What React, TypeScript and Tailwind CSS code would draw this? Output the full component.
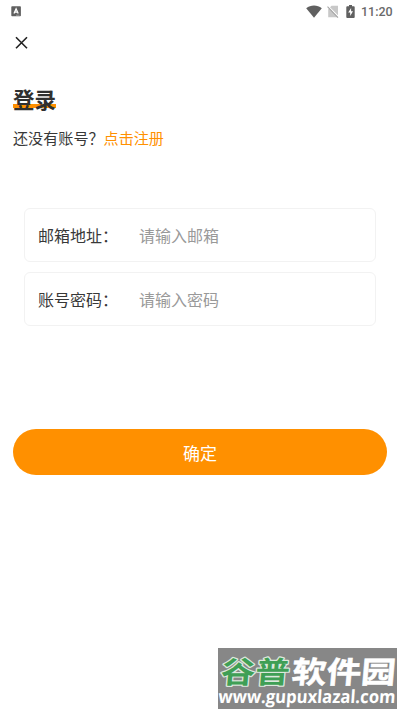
import React, { useState } from 'react';

function StatusBar() {
  return (
    <header className="flex h-[22px] items-center justify-between pl-[11px] pr-[7px]">
      <svg width="11" height="11" viewBox="0 0 11 11">
        <rect x="0.3" y="0.3" width="9.6" height="10" rx="0.8" fill="#606060" />
        <path d="M3 7.5 5.1 2.8 7.2 7.5M3.8 6.2h2.6" fill="none" stroke="#fff" strokeWidth="1.3" />
        <path d="M5 9.2h3.5" stroke="#bbb" strokeWidth="0.7" />
      </svg>
      <div className="flex items-center">
        <svg width="16" height="13" viewBox="0 0 16 13" fill="#606060">
          <path d="M0.2 3.2C4.7-0.3 11.3-0.3 15.8 3.2L8 12.8Z" />
        </svg>
        <svg className="ml-[5px]" width="12" height="13" viewBox="0 0 12 13">
          <path d="M4.5 0.8H11v11.4H1.2V4.3Z" fill="#c8c8c8" />
          <path d="M0.8 0.8 11.8 12" stroke="#fff" strokeWidth="1.2" />
          <path d="M0.5 1.6 11 12.6" stroke="#a5a5a5" strokeWidth="1.1" />
        </svg>
        <svg className="ml-[7px]" width="9" height="13" viewBox="0 0 9 13">
          <path d="M3 0h3v1.3h1.8q.9 0 .9.9v9.9q0 .9-.9.9H1.2q-.9 0-.9-.9V2.2q0-.9.9-.9H3Z" fill="#606060" />
          <path d="M5.1 3 2.2 7.6h2v3.4l2.8-4.7h-1.9Z" fill="#fff" />
        </svg>
        <span className="ml-[6px] mt-[2px] w-8 whitespace-nowrap font-['Roboto',sans-serif] text-[12.5px] font-medium leading-none text-[#6a6a6a]">
          11:20
        </span>
      </div>
    </header>
  );
}

interface FieldProps {
  label: string;
  placeholder: string;
  type: string;
}

function Field({ label, placeholder, type }: FieldProps) {
  const [value, setValue] = useState('');

  return (
    <label className="flex h-[54px] items-center rounded-md border border-[#f2f2f2] pl-[13px] pr-3">
      <span className="w-[101px] shrink-0 text-base text-[#383838]">{label}</span>
      <input
        className="min-w-0 flex-1 bg-transparent text-base text-[#383838] outline-none placeholder:text-[#999]"
        type={type}
        placeholder={placeholder}
        value={value}
        onChange={(e) => setValue(e.target.value)}
      />
    </label>
  );
}

function Watermark() {
  return (
    <div className="absolute left-[218px] top-[648px] h-[61px] w-[179px] bg-[#878787]">
      <svg
        className="overflow-visible"
        width="179"
        height="61"
        viewBox="0 0 179 61"
        fontFamily="'Noto Sans CJK SC', sans-serif"
        fontWeight="700"
      >
        <g transform="translate(2 35) skewX(-5)">
          <text
            fontSize="30"
            textLength="69"
            lengthAdjust="spacingAndGlyphs"
            fill="#3f9f55"
            stroke="#dce8dd"
            strokeWidth="2.4"
            strokeLinejoin="round"
            paintOrder="stroke"
          >
            谷普
          </text>
          <text
            x="71"
            fontSize="30"
            textLength="104"
            lengthAdjust="spacingAndGlyphs"
            fill="#fff"
            stroke="#fff"
            strokeWidth="0.5"
          >
            软件园
          </text>
        </g>
        <text
          transform="translate(0 55) skewX(-4)"
          fontFamily="'Open Sans', sans-serif"
          fontSize="18"
          textLength="177"
          lengthAdjust="spacingAndGlyphs"
          fill="#fff"
        >
          www.gupuxlazal.com
        </text>
      </svg>
    </div>
  );
}

export default function App() {
  return (
    <div className="relative h-[712px] w-[400px] overflow-hidden bg-white font-['Noto_Sans_CJK_SC',sans-serif]">
      <StatusBar />

      {/* Close */}
      <button className="ml-[15px] mt-[14px] block" aria-label="关闭">
        <svg width="13" height="13" viewBox="0 0 13 13" fill="none" stroke="#222" strokeWidth="1.6">
          <path d="M1 1.2 12 12.2M12 1.2 1 12.2" />
        </svg>
      </button>

      <main className="px-[13px]">
        {/* Title */}
        <div className="mt-[34px] flex">
          <h1 className="h-8 bg-linear-to-b from-transparent from-[21px] via-[#ff9000] via-[21px] to-[#ff9000] to-[25px] bg-[length:100%_25px] bg-no-repeat text-[21.5px] font-bold leading-8 text-[#303030]">
            登录
          </h1>
        </div>
        <p className="mt-[10px] text-[15.1px] leading-6 text-[#383838]">
          还没有账号？
          <a className="text-[#ff9000]">点击注册</a>
        </p>

        {/* Form */}
        <form className="mt-[59px]" onSubmit={(e) => e.preventDefault()}>
          <div className="flex flex-col gap-[10px] px-[11px]">
            <Field label="邮箱地址：" placeholder="请输入邮箱" type="email" />
            <Field label="账号密码：" placeholder="请输入密码" type="password" />
          </div>
          <button className="mt-[103px] h-[46px] w-full rounded-full bg-[#ff9000] pt-[2px] text-[17px] text-white">
            确定
          </button>
        </form>
      </main>

      <Watermark />
    </div>
  );
}
